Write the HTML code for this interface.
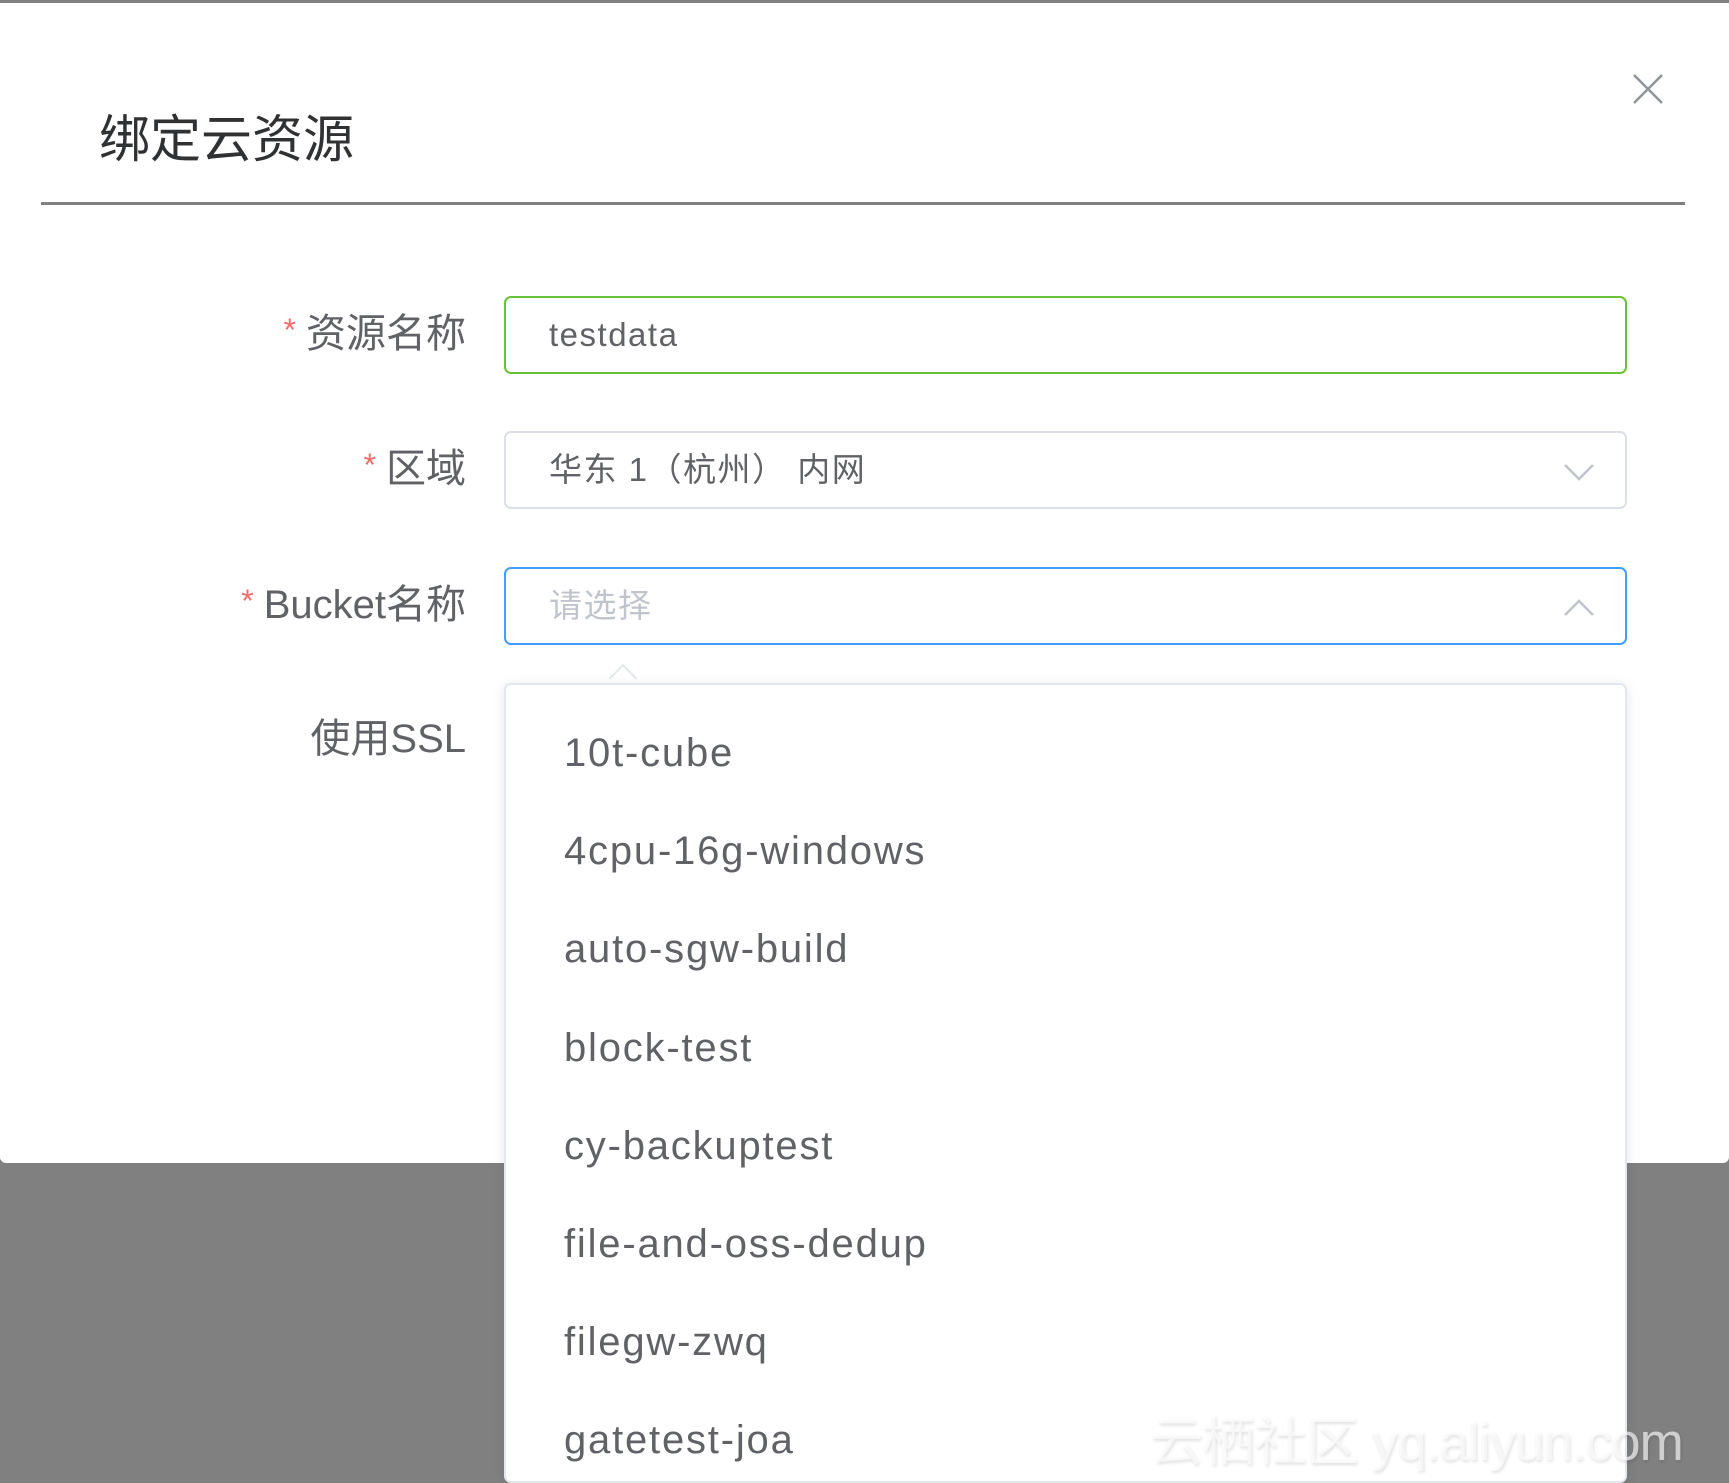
<!DOCTYPE html>
<html><head><meta charset="utf-8"><style>
*{box-sizing:border-box;margin:0;padding:0}
body{width:1729px;height:1478px;overflow:hidden;background:#808080;font-family:"Liberation Sans","Noto Sans CJK SC",sans-serif;position:relative}
.modal{position:absolute;left:0;top:3px;width:1729px;height:1160px;background:#fff;border-radius:0 0 6px 6px}
.title{position:absolute;left:99px;top:107px;font-size:51px;color:#303133;line-height:60px}
.divider{position:absolute;left:41px;top:199px;width:1644px;height:3px;background:#808080}
.close{position:absolute;left:1632px;top:70px}
.label{position:absolute;right:1263px;font-size:40px;color:#606266;line-height:50px;white-space:nowrap}
.label .s{color:#f56c6c;font-size:32px;margin-right:10px;position:relative;top:-6px}
.inp{position:absolute;left:504px;width:1123px;height:78px;border:2px solid #dcdfe6;border-radius:7px;font-size:33px;color:#606266;padding-left:43px;line-height:74px;letter-spacing:1.5px}
.dd{position:absolute;left:504px;top:683px;width:1123px;height:800px;background:#fff;border:2px solid #e4e7ed;border-radius:7px;box-shadow:0 2px 12px rgba(0,0,0,.1)}
.arrow{position:absolute;left:613px;top:668px;width:20px;height:20px;background:#fff;border-left:2px solid #e4e7ed;border-top:2px solid #e4e7ed;transform:rotate(45deg)}
.item{position:absolute;left:58px;font-size:40px;color:#606266;line-height:50px;letter-spacing:1.8px}
.wm{position:absolute;left:1150px;top:1400px;font-size:53px;color:rgba(255,255,255,.65);white-space:nowrap;letter-spacing:-1px;text-shadow:1px 2px 3px rgba(0,0,0,.12)}
</style></head><body>
<div class="modal">
<div class="title">绑定云资源</div>
<svg class="close" width="32" height="32" viewBox="0 0 32 32"><path d="M2 2L30 30M30 2L2 30" stroke="#909399" stroke-width="2.5" fill="none"/></svg>
<div class="divider"></div>
<div class="label" style="top:306px"><span class="s">*</span>资源名称</div>
<div class="inp" style="top:293px;border-color:#67c23a">testdata</div>
<div class="label" style="top:441px"><span class="s">*</span>区域</div>
<div class="inp" style="top:428px">华东 1（杭州） 内网
<svg style="position:absolute;right:30px;top:30px" width="32" height="18" viewBox="0 0 32 18"><path d="M2 2L16 16L30 2" stroke="#c0c4cc" stroke-width="2.5" fill="none"/></svg></div>
<div class="label" style="top:577px"><span class="s">*</span>Bucket名称</div>
<div class="inp" style="top:564px;border-color:#409eff;color:#c0c4cc">请选择
<svg style="position:absolute;right:30px;top:30px" width="32" height="18" viewBox="0 0 32 18"><path d="M2 16L16 2L30 16" stroke="#c0c4cc" stroke-width="2.5" fill="none"/></svg></div>
<div class="label" style="top:711px">使用SSL</div>
</div>
<div class="arrow"></div>
<div class="dd">
<div class="item" style="top:43px">10t-cube</div>
<div class="item" style="top:141px">4cpu-16g-windows</div>
<div class="item" style="top:239px">auto-sgw-build</div>
<div class="item" style="top:338px">block-test</div>
<div class="item" style="top:436px">cy-backuptest</div>
<div class="item" style="top:534px">file-and-oss-dedup</div>
<div class="item" style="top:632px">filegw-zwq</div>
<div class="item" style="top:730px">gatetest-joa</div>
</div>
<div class="wm">云栖社区 yq.aliyun.com</div>
</body></html>
